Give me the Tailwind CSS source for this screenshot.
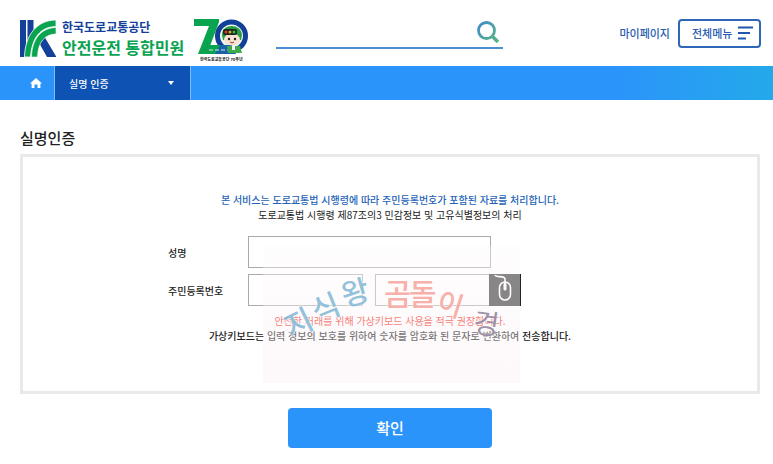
<!doctype html>
<html lang="ko">
<head>
  <meta charset="UTF-8">
  <meta name="viewport" content="width=device-width, initial-scale=1.0">
  <script src="https://cdn.jsdelivr.net/npm/@tailwindcss/browser@4"></script>
  <title>실명인증</title>
</head>
<body class="bg-white font-['Noto_Sans_CJK_KR',sans-serif] text-[10px] text-[#222]">

<header class="flex items-center h-[66px] pl-5 pr-3">
  <a href="#" class="flex items-center pt-[11px]">
    <svg class="w-9 h-[37px] mr-[6px]" viewBox="0 0 36 37">
      <path d="M0 0h6v37H0zM7.500 0h6v18l-6 10z" fill="#12409a"></path>
      <path d="M18 21l6-5 12.500 21H27z" fill="#12409a"></path>
      <path d="M36 0v6.500C20 7 12 18 10.500 37H4.500C5 15 17 0 36 0z" fill="#0aa34f" stroke="#fff" stroke-width=".8"></path>
      <path d="M36 7.500V14C25 14 18 22 17.500 37H11.500C12 19 21 8 36 7.500z" fill="#0aa34f" stroke="#fff" stroke-width=".6"></path>
    </svg>
    <span class="flex flex-col font-bold">
      <span class="text-[12px] leading-4 text-[#12409a]">한국도로교통공단</span>
      <span class="text-[16px] leading-6 text-[#0aa34f]">안전운전 통합민원</span>
    </span>
  </a>
  <a href="#" class="flex flex-col items-center ml-[10px] pt-4">
    <svg class="w-[54px] h-[37px]" viewBox="0 0 54 37">
      <path d="M0 1h25v3L13 36H4L15 8H0z" fill="#0aa34f"></path>
      <circle cx="37.500" cy="18" r="14" fill="#e9f5ea" stroke="#123f98" stroke-width="5"></circle>
      <path d="M14 27h24l4 9H10z" fill="#1a63a8"></path>
      <path d="M14 27h12l-5 9H7z" fill="#0aa34f"></path>
      <path d="M15 32h20" stroke="#d9ecf0" stroke-width="1" stroke-dasharray="4 2"></path>
      <path d="M28 17c0-12 19-12 20 0l-1 5H29z" fill="#2c9b45"></path>
      <ellipse cx="38" cy="21.500" rx="8" ry="6" fill="#f7e3d0"></ellipse>
      <rect x="29" y="11" width="14" height="6" rx="2" fill="#17251f"></rect>
      <circle cx="32" cy="14" r="1.500" fill="#e5332d"></circle>
      <circle cx="36" cy="14" r="1.500" fill="#e0a722"></circle>
      <circle cx="40" cy="14" r="1.500" fill="#36ba4b"></circle>
      <circle cx="35" cy="21" r="1.200" fill="#222"></circle>
      <circle cx="41" cy="21" r="1.200" fill="#222"></circle>
      <path d="M36 24q2 2 4 0" stroke="#b33" fill="none"></path>
      <path d="M33 28h13l2 7H34z" fill="#3cab4b"></path>
      <path d="M38 28h3v4h-3z" fill="#fff"></path>
    </svg>
    <span class="text-[4px] leading-[9px] font-bold text-[#222]">한국도로교통공단 70주년</span>
  </a>

  <form class="flex items-center w-[227px] h-8 ml-[28px] border-b-2 border-[#4b8fd0]">
    <input type="search" aria-label="검색" class="flex-1 min-w-0 h-7 outline-none">
    <button type="button" aria-label="검색" class="mr-1">
      <svg class="w-[22px] h-[22px]" viewBox="0 0 22 22" fill="none">
        <defs>
          <linearGradient id="searchColor" x1="0" y1="0" x2="22" y2="22" gradientUnits="userSpaceOnUse">
            <stop stop-color="#3f86d3"></stop>
            <stop offset="1" stop-color="#56bd78"></stop>
          </linearGradient>
        </defs>
        <circle cx="9.500" cy="9.500" r="8" stroke="url(#searchColor)" stroke-width="2.800"></circle>
        <path d="M15 15l6 6" stroke="url(#searchColor)" stroke-width="3.600"></path>
      </svg>
    </button>
  </form>

  <div class="flex items-center ml-auto text-[#2a5db0] text-[11px] font-medium">
    <a href="#" class="mr-2">마이페이지</a>
    <button type="button" class="flex items-center justify-between w-[83px] h-[29px] pl-3 pr-[6px] border-2 border-[#2f66b8] rounded">
      <span>전체메뉴</span>
      <svg class="w-4 h-[14px]" viewBox="0 0 16 14" stroke="#1f56ae" stroke-width="2.200">
        <path d="M1 1.500h15M1 7h12M1 12.500h8"></path>
      </svg>
    </button>
  </div>
</header>

<nav class="flex h-[34px] bg-linear-to-r from-[#2b94fa] from-80% to-[#24a9ea] text-white font-medium">
  <a href="#" aria-label="홈" class="flex items-center justify-end w-[55px] pr-3 border-r border-[#7dbcf7]">
    <svg class="w-3 h-[10px]" viewBox="0 0 12 10" fill="currentColor">
      <path d="M6 0l6 5.500h-1.600V10H7.500V6.500h-3V10H1.600V5.500H0z"></path>
    </svg>
  </a>
  <button type="button" class="flex items-center justify-between w-[136px] pl-[14px] pr-4 bg-[#0e52b3] border-r border-[#7dbcf7]">
    <span>실명 인증</span>
    <svg class="w-[6px] h-1" viewBox="0 0 6 4" fill="currentColor"><path d="M0 0h6L3 4z"></path></svg>
  </button>
</nav>

<main class="pl-5 pr-[13px] pt-[26px]">
  <h1 class="text-[15px] leading-6 mb-1 font-medium">실명인증</h1>

  <section class="relative border-3 border-[#e9e9e9] pt-[35px] pb-12">
    <p class="text-center leading-[15px] font-medium text-[#2563b8]">본 서비스는 도로교통법 시행령에 따라 주민등록번호가 포함된 자료를 처리합니다.</p>
    <p class="text-center leading-[15px]">도로교통법 시행령 제87조의3 민감정보 및 고유식별정보의 처리</p>

    <form class="w-[444px] mx-auto mt-[14px] font-medium">
      <div class="flex items-center mb-[6px]">
        <label for="name" class="w-20">성명</label>
        <input type="text" id="name" name="name" class="w-[243px] h-8 px-2 border border-[#aaa]">
      </div>
      <div class="flex items-center">
        <label for="jumin1" class="w-20">주민등록번호</label>
        <input type="text" id="jumin1" name="jumin1" class="w-[115px] h-8 px-2 border border-[#aaa]">
        <input type="password" id="jumin2" name="jumin2" aria-label="주민등록번호 뒷자리" class="w-[115px] h-8 ml-3 px-2 border border-[#aaa]">
        <button type="button" aria-label="마우스 입력" class="w-8 h-8 -ml-px bg-[#3a3a3a] border-r border-[#222]">
          <svg class="w-full h-full" viewBox="0 0 31 32" fill="none" stroke="#fff" stroke-width="1.600">
            <rect x="10.500" y="8" width="11" height="18" rx="5.500"></rect>
            <path d="M6 1c1 3 10 0 10 4v5"></path>
            <path d="M16 10v5" stroke-width="3" stroke-linecap="round"></path>
          </svg>
        </button>
      </div>
    </form>

    <p class="text-center mt-[7px] leading-[15px] text-[#f0301c]">안전한 거래를 위해 가상키보드 사용을 적극 권장합니다.</p>
    <p class="text-center leading-[15px] font-medium">가상키보드는 입력 정보의 보호를 위하여 숫자를 암호화 된 문자로 변환하여 전송합니다.</p>

    <!-- translucent stamp over the form -->
    <div class="absolute bottom-2 left-1/2 w-[257px] h-[137px] -ml-[127px] bg-linear-to-b from-[#fdfafb]/40 to-[#fbeff3]/40 pointer-events-none">
      <svg class="w-full h-full" viewBox="0 0 257 137" font-size="30" font-weight="500" stroke="#fff" stroke-opacity=".6" stroke-width="1.500" paint-order="stroke">
        <g fill="#86bad6" fill-opacity=".9">
          <text transform="translate(28 93) rotate(-26)">지</text>
          <text transform="translate(54 77) rotate(-22)">식</text>
          <text transform="translate(82 61) rotate(-16)">왕</text>
        </g>
        <g fill="#f8a79f" fill-opacity=".9">
          <text transform="translate(121 59)">곰</text>
          <text transform="translate(146 59)">돌</text>
          <text transform="translate(172 64) rotate(18)" font-size="28">이</text>
        </g>
        <text transform="translate(209 86) rotate(8)" font-size="28" font-weight="400" fill="#93839d" fill-opacity=".9">경</text>
      </svg>
    </div>
  </section>

  <div class="flex justify-center mt-[14px] pb-4">
    <button type="submit" class="w-[204px] h-10 bg-[#2b94fa] rounded text-white text-[15px] font-medium">확인</button>
  </div>
</main>

</body>
</html>
